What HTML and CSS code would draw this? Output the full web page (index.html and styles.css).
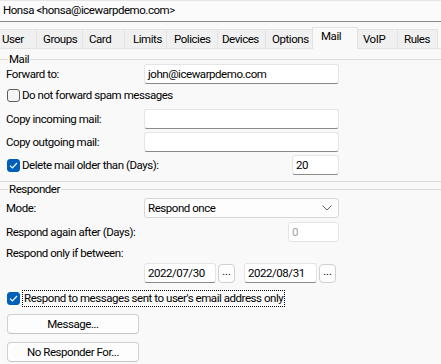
FILE: index.html
```html
<!DOCTYPE html>
<html lang="en">
  <head>
    <meta charset="UTF-8" />
    <title>Honsa - Mail</title>
    <link rel="stylesheet" href="styles.css">
  </head>
  <body>
    <div class="header">Honsa &lt;honsa@icewarpdemo.com&gt;</div>

    <!-- Tabs -->
    <div class="tabs">
      <div class="tab t-user">User</div>
      <div class="tab t-groups">Groups</div>
      <div class="tab t-card">Card</div>
      <div class="tab t-limits">Limits</div>
      <div class="tab t-policies">Policies</div>
      <div class="tab t-devices">Devices</div>
      <div class="tab t-options">Options</div>
      <div class="tab t-mail active">Mail</div>
      <div class="tab t-voip">VoIP</div>
      <div class="tab t-rules">Rules</div>
    </div>

    <!-- Mail group -->
    <fieldset class="group group-mail">
      <legend>Mail</legend>

      <div class="row r-forward">
        <span class="label">Forward to:</span>
        <div class="input wide">john@icewarpdemo.com</div>
      </div>

      <div class="row r-spam">
        <span class="check"></span>
        <span class="check-text">Do not forward spam messages</span>
      </div>

      <div class="row r-copyin">
        <span class="label">Copy incoming mail:</span>
        <div class="input wide"></div>
      </div>

      <div class="row r-copyout">
        <span class="label">Copy outgoing mail:</span>
        <div class="input wide"></div>
      </div>

      <div class="row r-delete spread">
        <div class="check-wrap">
          <span class="check on">
            <svg width="9" height="7" viewBox="0 0 9 7"><path d="M1 3.6 L3.4 6 L8 1" fill="none" stroke="#fff" stroke-width="1.2"/></svg>
          </span>
          <span class="check-text">Delete mail older than (Days):</span>
        </div>
        <div class="input days">20</div>
      </div>
    </fieldset>

    <!-- Responder group -->
    <fieldset class="group group-responder">
      <legend>Responder</legend>

      <div class="row r-mode">
        <span class="label">Mode:</span>
        <div class="select">
          <span>Respond once</span>
          <svg width="10" height="6" viewBox="0 0 10 6"><path d="M0.5 0.5 L5 5 L9.5 0.5" fill="none" stroke="#606060" stroke-width="1"/></svg>
        </div>
      </div>

      <div class="row r-again spread">
        <span class="label">Respond again after (Days):</span>
        <div class="input again disabled">0</div>
      </div>

      <div class="row r-between">
        <span class="label">Respond only if between:</span>
      </div>

      <div class="row r-dates">
        <div class="input date">2022/07/30</div>
        <div class="dots">...</div>
        <div class="input date date-to">2022/08/31</div>
        <div class="dots">...</div>
      </div>

      <div class="row r-only">
        <span class="check on">
          <svg width="9" height="7" viewBox="0 0 9 7"><path d="M1 3.6 L3.4 6 L8 1" fill="none" stroke="#fff" stroke-width="1.2"/></svg>
        </span>
        <span class="check-text focused">Respond to messages sent to user's email address only</span>
      </div>

      <button class="button b-message">Message...</button>
      <button class="button b-noresp">No Responder For...</button>
    </fieldset>
  </body>
</html>
```

FILE: styles.css
```css
body {
  margin: 0;
  background-color: #f9f9f9;
  font-family: Roboto, "Liberation Sans", Arial, sans-serif;
  font-size: 11.5px;
  letter-spacing: -0.45px;
  color: #000;
}
.header {
  height: 21px;
  line-height: 21px;
  padding-left: 3px;
  background-color: #fbfbfb;
  border-bottom: 1px solid #8a8a8a;
  box-shadow: inset 0 1px 0 #e6e6e6;
}

/* tabs */
.tabs {
  display: flex;
  margin-top: 5px;
  height: 21px;
  border-bottom: 1px solid #e3e3e3;
}
.tab {
  box-sizing: border-box;
  margin-top: 2px;
  height: 19px;
  line-height: 18px;
  padding-left: 6px;
  background-color: #f0f0f0;
  border: 1px solid #e3e3e3;
  border-left: none;
  border-bottom: none;
  white-space: nowrap;
}
.tab.active {
  margin-top: 0;
  height: 22px;
  line-height: 16px;
  background-color: #f9f9f9;
  border-left: 1px solid #e3e3e3;
  margin-left: -1px;
  position: relative;
  z-index: 1;
}
.t-user { width: 37px; padding-left: 2px; }
.t-groups { width: 46px; }
.t-card { width: 42px; }
.t-limits { width: 42px; padding-left: 8px; }
.t-policies { width: 51px; padding-left: 7px; }
.t-devices { width: 48px; padding-left: 4px; }
.t-options { width: 47px; }
.t-mail { width: 46px; padding-left: 8px; }
.t-voip { width: 40px; padding-left: 5px; }
.t-rules { width: 40px; }

/* group boxes */
.group {
  margin: 0;
  padding: 0 0 0 6px;
  min-width: 0;
  border: none;
  border-top: 1px solid #dcdcdc;
}
.group legend {
  margin-left: 2px;
  padding: 0 1px;
  line-height: 12px;
}
.group-mail {
  margin-top: 4px;
  padding-bottom: 6px;
  border-bottom: 1px solid #dcdcdc;
}
.group-responder {
  margin-top: 1px;
  padding-bottom: 0;
}

.row {
  display: flex;
  align-items: center;
  height: 20px;
  width: 333px;
}
.row.spread {
  justify-content: space-between;
}
.label {
  width: 138px;
  flex-shrink: 0;
  white-space: nowrap;
}
.r-forward { margin-top: -1px; }
.r-spam { margin-top: 1px; }
.r-copyin { margin-top: 4px; }
.r-copyout { margin-top: 3px; }
.r-delete { margin-top: 3px; }
.r-mode { margin-top: 3px; }
.r-again { margin-top: 4px; }
.r-between { margin-top: 1px; }
.r-dates { padding-left: 138px; }
.r-only { margin-top: 5px; }

/* inputs */
.input {
  box-sizing: border-box;
  height: 20px;
  line-height: 18px;
  padding-left: 3px;
  background-color: #fff;
  border: 1px solid #e5e5e5;
  border-bottom-color: #8a8a8a;
  border-radius: 3px;
  white-space: nowrap;
}
.input.wide { width: 195px; }
.input.days { width: 47px; }
.input.again { width: 51px; }
.input.disabled {
  border-bottom-color: #e5e5e5;
  color: #9aa0a6;
}
.input.date { width: 72px; }
.input.date-to { margin-left: 9px; width: 73px; }
.dots {
  box-sizing: border-box;
  width: 17px;
  height: 19px;
  margin-left: 2px;
  line-height: 14px;
  text-align: center;
  background-color: #fdfdfd;
  border: 1px solid #d0d0d0;
  border-radius: 4px;
  font-size: 11px;
  letter-spacing: 0;
}
.select {
  box-sizing: border-box;
  display: flex;
  justify-content: space-between;
  align-items: center;
  width: 195px;
  height: 20px;
  padding: 0 6px 0 3px;
  background-color: #fdfdfd;
  border: 1px solid #d6d6d6;
  border-radius: 3px;
}

/* checkboxes */
.check-wrap {
  display: flex;
  align-items: center;
}
.check {
  box-sizing: border-box;
  display: flex;
  align-items: center;
  justify-content: center;
  flex-shrink: 0;
  width: 13px;
  height: 13px;
  margin-left: 1px;
  border: 1px solid #5e5e5e;
  border-radius: 3px;
  background-color: #f5f5f5;
}
.check.on {
  border-color: #005fb8;
  background-color: #005fb8;
}
.check-text {
  margin-left: 2px;
  white-space: nowrap;
}
.check-text.focused {
  padding: 0 1px;
  border: 1px dotted #000;
  line-height: 15px;
}

/* buttons */
.button {
  display: block;
  box-sizing: border-box;
  width: 132px;
  height: 20px;
  margin-left: 1px;
  padding: 0;
  font-family: inherit;
  font-size: 11.5px;
  letter-spacing: inherit;
  color: #000;
  background-color: #fdfdfd;
  border: 1px solid #d0d0d0;
  border-bottom-color: #c4c4c4;
  border-radius: 4px;
}
.b-message { margin-top: 6px; }
.b-noresp { margin-top: 8px; }
```
